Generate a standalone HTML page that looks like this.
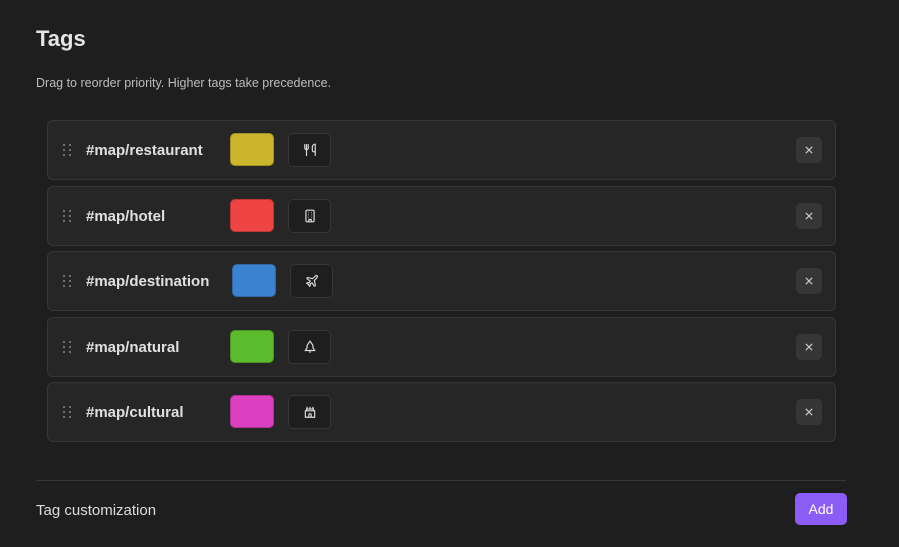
<!DOCTYPE html>
<html><head><style>
body{margin:0;width:899px;height:547px;background:#1e1e1e;font-family:"Liberation Sans",sans-serif;color:#dcddde;position:relative;overflow:hidden}
.a{position:absolute}
h1{position:absolute;left:36px;top:26px;margin:0;font-size:22px;font-weight:600;color:#e4e4e4}
.desc{left:36px;top:76px;font-size:12.5px;color:#bdbdbd}
.row{position:absolute;left:47px;width:787px;height:58px;background:#262626;border:1px solid #363636;border-radius:6px}
.dots{position:absolute;left:14px;top:22px;width:10px;height:14px}
.name{position:absolute;left:38px;top:21px;font-size:15px;font-weight:bold;color:#e0e0e0}
.sw{position:absolute;top:12px;width:44px;height:33px;box-sizing:border-box;border-radius:5px;border:1px solid rgba(0,0,0,.2)}
.ic{position:absolute;top:12px;width:41px;height:32px;background:#1e1e1e;border:1px solid #363636;border-radius:5px;display:flex;align-items:center;justify-content:center}
.x{position:absolute;left:748px;top:16px;width:26px;height:26px;background:#363636;border-radius:5px;display:flex;align-items:center;justify-content:center}
</style></head><body>
<h1>Tags</h1>
<div class="a desc">Drag to reorder priority. Higher tags take precedence.</div>

<div class="row" style="top:120px">
<svg class="dots" viewBox="0 0 10 14" fill="#888"><circle cx="2" cy="2" r="1"/><circle cx="8" cy="2" r="1"/><circle cx="2" cy="7" r="1"/><circle cx="8" cy="7" r="1"/><circle cx="2" cy="12" r="1"/><circle cx="8" cy="12" r="1"/></svg>
<div class="name">#map/restaurant</div>
<div class="sw" style="left:182px;background:#cbb52c"></div>
<div class="ic" style="left:240px"><svg width="14" height="14" viewBox="0 0 24 24" fill="none" stroke="#ddd" stroke-width="2"><path d="M3 2v7c0 1 1 2 2 2h2c1 0 2-1 2-2V2M6 2v20M21 15V2a5 5 0 0 0-5 5v6c0 1 1 2 2 2h3v7"/></svg></div>
<div class="x"><svg width="8" height="8" viewBox="0 0 10 10" stroke="#c8c8c8" stroke-width="1.5"><path d="M1 1l8 8M9 1l-8 8"/></svg></div>
</div>

<div class="row" style="top:186px">
<svg class="dots" viewBox="0 0 10 14" fill="#888"><circle cx="2" cy="2" r="1"/><circle cx="8" cy="2" r="1"/><circle cx="2" cy="7" r="1"/><circle cx="8" cy="7" r="1"/><circle cx="2" cy="12" r="1"/><circle cx="8" cy="12" r="1"/></svg>
<div class="name">#map/hotel</div>
<div class="sw" style="left:182px;background:#ef4444"></div>
<div class="ic" style="left:240px"><svg width="14" height="14" viewBox="0 0 24 24" fill="none" stroke="#ddd" stroke-width="2"><rect x="5" y="2" width="14" height="20" rx="2"/><path d="M10 22v-4h4v4M9 6h1M14 6h1M9 10h1M14 10h1M9 14h1M14 14h1"/></svg></div>
<div class="x"><svg width="8" height="8" viewBox="0 0 10 10" stroke="#c8c8c8" stroke-width="1.5"><path d="M1 1l8 8M9 1l-8 8"/></svg></div>
</div>

<div class="row" style="top:251px">
<svg class="dots" viewBox="0 0 10 14" fill="#888"><circle cx="2" cy="2" r="1"/><circle cx="8" cy="2" r="1"/><circle cx="2" cy="7" r="1"/><circle cx="8" cy="7" r="1"/><circle cx="2" cy="12" r="1"/><circle cx="8" cy="12" r="1"/></svg>
<div class="name">#map/destination</div>
<div class="sw" style="left:184px;background:#3b82d0"></div>
<div class="ic" style="left:242px"><svg width="14" height="14" viewBox="0 0 24 24" fill="none" stroke="#ddd" stroke-width="2"><path d="M17.8 19.2 16 11l3.5-3.5C21 6 21.5 4 21 3c-1-.5-3 0-4.5 1.5L13 8 4.8 6.2c-.5-.1-.9.1-1.1.5l-.3.5c-.2.5-.1 1 .3 1.3L9 12l-2 3H4l-1 1 3 2 2 3 1-1v-3l3-2 3.5 5.3c.3.4.8.5 1.3.3l.5-.2c.4-.3.6-.7.5-1.2z"/></svg></div>
<div class="x"><svg width="8" height="8" viewBox="0 0 10 10" stroke="#c8c8c8" stroke-width="1.5"><path d="M1 1l8 8M9 1l-8 8"/></svg></div>
</div>

<div class="row" style="top:317px">
<svg class="dots" viewBox="0 0 10 14" fill="#888"><circle cx="2" cy="2" r="1"/><circle cx="8" cy="2" r="1"/><circle cx="2" cy="7" r="1"/><circle cx="8" cy="7" r="1"/><circle cx="2" cy="12" r="1"/><circle cx="8" cy="12" r="1"/></svg>
<div class="name">#map/natural</div>
<div class="sw" style="left:182px;background:#5cbb2d"></div>
<div class="ic" style="left:240px"><svg width="14" height="14" viewBox="0 0 24 24" fill="none" stroke="#ddd" stroke-width="2"><path d="M12 2 7 9v4l-3 5h16l-3-5V9z M12 18v4"/></svg></div>
<div class="x"><svg width="8" height="8" viewBox="0 0 10 10" stroke="#c8c8c8" stroke-width="1.5"><path d="M1 1l8 8M9 1l-8 8"/></svg></div>
</div>

<div class="row" style="top:382px">
<svg class="dots" viewBox="0 0 10 14" fill="#888"><circle cx="2" cy="2" r="1"/><circle cx="8" cy="2" r="1"/><circle cx="2" cy="7" r="1"/><circle cx="8" cy="7" r="1"/><circle cx="2" cy="12" r="1"/><circle cx="8" cy="12" r="1"/></svg>
<div class="name">#map/cultural</div>
<div class="sw" style="left:182px;background:#dc3fbf"></div>
<div class="ic" style="left:240px"><svg width="14" height="14" viewBox="0 0 24 24" fill="none" stroke="#ddd" stroke-width="2"><path d="M7 3v4M12 3v4M17 3v4M6 7h12v3H6zM4 10h16v11H4zM10 21v-4a2 2 0 0 1 4 0v4"/></svg></div>
<div class="x"><svg width="8" height="8" viewBox="0 0 10 10" stroke="#c8c8c8" stroke-width="1.5"><path d="M1 1l8 8M9 1l-8 8"/></svg></div>
</div>

<div class="a" style="left:36px;top:480px;width:810px;height:1px;background:#363636"></div>
<div class="a" style="left:36px;top:502px;font-size:15px;color:#dcdcdc">Tag customization</div>
<div class="a" style="left:795px;top:493px;width:52px;height:32px;background:#8b5cf6;border-radius:5px;color:#fff;font-size:14px;display:flex;align-items:center;justify-content:center">Add</div>
</body></html>
